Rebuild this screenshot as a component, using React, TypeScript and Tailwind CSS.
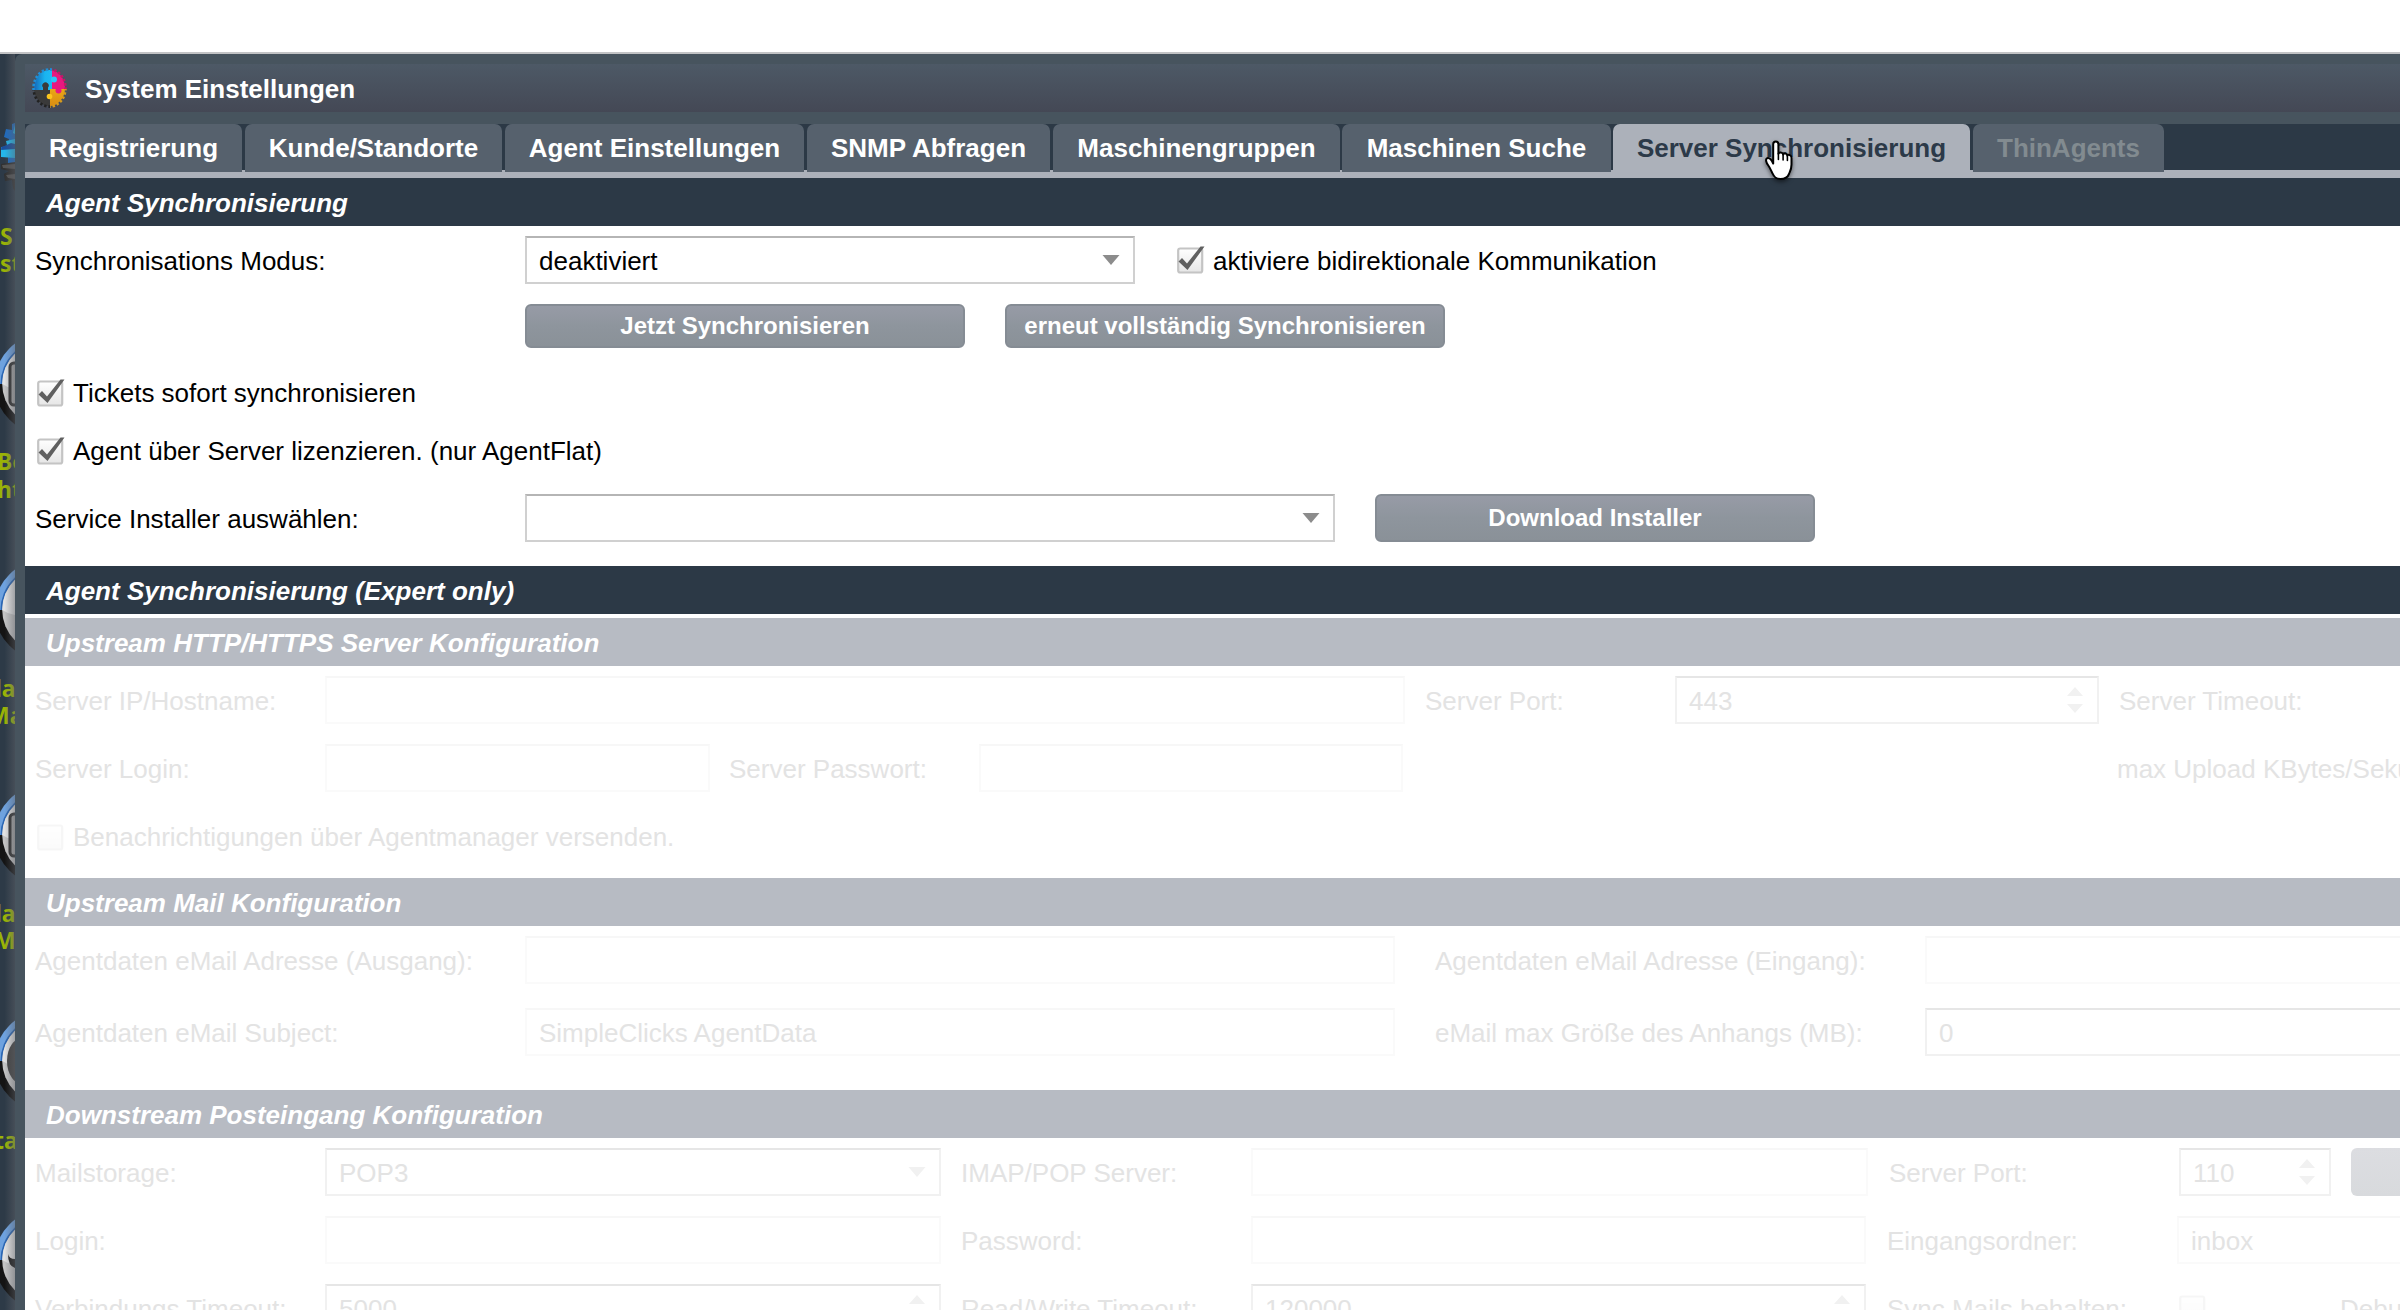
import type { ReactNode } from "react";
import clsx from "clsx";

interface Tab {
  label: string;
  size: string;
  state?: "active" | "disabled";
}

const TABS: Tab[] = [
  { label: "Registrierung", size: "w-[217px] mr-[3px]" },
  { label: "Kunde/Standorte", size: "w-[257px] mr-[3px]" },
  { label: "Agent Einstellungen", size: "w-[299px] mr-[3px]" },
  { label: "SNMP Abfragen", size: "w-[243px] mr-[3px]" },
  { label: "Maschinengruppen", size: "w-[287px] mr-[2px]" },
  { label: "Maschinen Suche", size: "w-[269px] mr-[2px]" },
  { label: "Server Synchronisierung", size: "w-[357px] mr-[3px]", state: "active" },
  { label: "ThinAgents", size: "w-[191px]", state: "disabled" },
];

const DESKTOP_DIALS = [
  { place: "top-[280px]", glyph: "box" },
  { place: "top-[506px]", glyph: "none" },
  { place: "top-[731px]", glyph: "box" },
  { place: "top-[957px]", glyph: "disc" },
  { place: "top-[1156px]", glyph: "arrow" },
];

const DESKTOP_LABELS = [
  { text: "S", place: "top-[169px] left-0" },
  { text: "st", place: "top-[196px] left-0" },
  { text: "Be", place: "top-[394px] left-[-3px]" },
  { text: "ht", place: "top-[422px] left-[-3px]" },
  { text: "la", place: "top-[621px] left-[-5px]" },
  { text: "Ma", place: "top-[648px] left-[-12px]" },
  { text: "la", place: "top-[846px] left-[-5px]" },
  { text: "M", place: "top-[873px] left-[-6px]" },
  { text: "ta", place: "top-[1073px] left-[-6px]" },
];

const AppIcon = () => (
  <svg viewBox="0 0 35 40" className="ml-[7px] h-10 w-[35px] shrink-0">
    <defs>
      <linearGradient id="cyan" x1="0" y1="0" x2="1" y2="0">
        <stop offset="0" stopColor="#1667b8" />
        <stop offset="0.35" stopColor="#19b4f0" />
        <stop offset="1" stopColor="#2cc4fa" />
      </linearGradient>
      <linearGradient id="gold" x1="0" y1="0" x2="0" y2="1">
        <stop offset="0" stopColor="#fcc51c" />
        <stop offset="1" stopColor="#d98d12" />
      </linearGradient>
      <clipPath id="tl"><path d="M0 0H20V22H0z" /></clipPath>
      <clipPath id="tr"><path d="M20 0H35V21H20z" /></clipPath>
      <clipPath id="br"><path d="M18 21H35V40H18z" /></clipPath>
      <clipPath id="bl"><path d="M0 22H18V40H0z" /></clipPath>
    </defs>
    <g clipPath="url(#tl)">
      <ellipse cx="17.5" cy="20" rx="15.5" ry="18" fill="url(#cyan)" />
      <ellipse cx="17.5" cy="20" rx="16" ry="18.6" fill="none" stroke="#1f8fd8" strokeWidth="2.6" strokeDasharray="2.4 1.9" />
    </g>
    <g clipPath="url(#tr)">
      <ellipse cx="17.5" cy="20" rx="15.5" ry="18" fill="#e8187f" />
      <ellipse cx="17.5" cy="20" rx="16" ry="18.6" fill="none" stroke="#c51569" strokeWidth="2.6" strokeDasharray="2.4 1.9" />
    </g>
    <g clipPath="url(#bl)">
      <ellipse cx="17.5" cy="20" rx="15.5" ry="18" fill="#3a3a3a" />
      <ellipse cx="17.5" cy="20" rx="16" ry="18.6" fill="none" stroke="#222" strokeWidth="2.6" strokeDasharray="2.4 1.9" />
    </g>
    <g clipPath="url(#br)">
      <ellipse cx="17.5" cy="20" rx="15.5" ry="18" fill="url(#gold)" />
      <ellipse cx="17.5" cy="20" rx="16" ry="18.6" fill="none" stroke="#d79a1c" strokeWidth="2.6" strokeDasharray="2.4 1.9" />
    </g>
    <circle cx="22" cy="11.5" r="3" fill="#2cc4fa" />
    <circle cx="26.5" cy="22.5" r="3" fill="#e8187f" />
    <circle cx="17.5" cy="28.5" r="2.8" fill="#fcc51c" />
    <path d="M11 23v-3.5a3.2 3.2 0 1 1 5 0V23z" fill="#3a3a3a" />
  </svg>
);

const DesktopGear = () => (
  <svg viewBox="0 0 15 74" className="absolute left-0 top-[67px] h-[74px] w-[15px]">
    <path d="M15 2l-3 1v6l-6-1-2 8 5 2-1 7-7 1v8l7 2v6h7z" fill="#1e6bc0" />
    <path d="M15 4l-2 8 2 1zM15 18l-9 2 1 4 8 1zM15 27L1 28v8l14 1z" fill="#25b6ea" />
    <path d="M2 26l9-4 4 1v5L1 29z" fill="#1b4f9c" />
    <path d="M15 41l-14 2v5l8 2-5 3 1 7 7-1 1 8 2 3z" fill="#313131" />
    <path d="M15 43L2 44l1 3 12 1zM15 53l-9 1 2 3 7 1z" fill="#545454" />
  </svg>
);

const Dial = ({ place, glyph }: { place: string; glyph: string }) => (
  <svg viewBox="-6 -50 21 100" className={clsx("absolute left-[-6px] h-[100px] w-[21px]", place)}>
    <path d="M-5.5 0a50 50 0 0 1 100 0z" fill="#6ea2df" />
    <path d="M-5.5 0a50 50 0 0 0 100 0z" fill="#141414" />
    <path d="M.5 0a44 44 0 0 1 88 0z" fill="#2a66b4" />
    <circle cx="44.5" cy="0" r="42.3" fill="#c4c4c4" />
    <path d="M2.2 0a42.3 42.3 0 0 1 12.8-30V5Q8 4 2.2 0z" fill="#e2e2e2" />
    {glyph === "box" && <rect x="10" y="-21" width="20" height="42" rx="4" fill="#a9a9a9" stroke="#333" strokeWidth="3" />}
    {glyph === "disc" && <ellipse cx="24" cy="0" rx="17" ry="24" fill="#444" />}
    {glyph === "arrow" && <path d="M8-6q1 5 7 5v9Q8 6 8-6z" fill="#1c1c1c" />}
  </svg>
);

const HandCursor = () => (
  <svg viewBox="0 0 30 42" className="absolute left-[151px] top-[16px] h-[42px] w-[30px] drop-shadow-[0_2px_2px_rgba(0,0,0,0.5)]">
    <path
      d="M9.2 20.5V4.2a2.6 2.6 0 0 1 5.2 0v9.6c.4-2 4.4-1.800 4.700.7.500-1.600 4-1.200 4.300 1 .900-1.400 4.100-.5 4.100 2.300v6.600c0 5-1.500 7-2.500 9.500-1.200 3.600-4 5.100-8.500 5.100-5 0-6.500-2.300-8-5.600-1.400-3-2.400-5.600-4.500-8.400-1.600-2.200-2.900-5.800-1-6.700 2.200-.9 4.400 1.200 6.200 5.200z"
      fill="#fff"
      stroke="#000"
      strokeWidth="2"
      strokeLinejoin="round"
    />
    <path d="M14.4 13.5v6M19.1 14.5v5.5M23.4 15.5v5" fill="none" stroke="#000" strokeWidth="1.6" strokeLinecap="round" />
  </svg>
);

const Label = ({ w, children }: { w?: string; children: ReactNode }) => (
  <span className={clsx("shrink-0 pt-[2px] whitespace-nowrap", w)}>{children}</span>
);

interface FieldProps {
  w: string;
  value?: string;
  kind?: "text" | "combo" | "spinner";
  disabled?: boolean;
}

const Field = ({ w, value, kind = "text", disabled }: FieldProps) => (
  <div
    className={clsx(
      "flex h-12 shrink-0 items-center justify-between border-2 bg-white pl-3",
      w,
      !disabled && "border-[#d0d0d0] border-t-[#b5b5b5]",
      disabled && kind === "text" && "border-[#fafafa] border-t-[#f7f7f7]",
      disabled && kind !== "text" && "border-[#f1f1f1] border-t-[#e6e6e6]",
    )}
  >
    <span className="pt-[2px]">{value}</span>
    {kind === "combo" && (
      <svg viewBox="0 0 18 10" className={clsx("mr-[13px] h-[10px] w-[18px]", disabled ? "text-[#f1f1f1]" : "text-[#8c8c8c]")}>
        <path d="M.5 0h17L9 10z" fill="currentColor" />
      </svg>
    )}
    {kind === "spinner" && (
      <svg viewBox="0 0 16 26" className="mr-[14px] h-[26px] w-4 text-[#f1f1f1]">
        <path d="M8 0l8 9H0zM0 17h16l-8 9z" fill="currentColor" />
      </svg>
    )}
  </div>
);

const Checkbox = ({ checked, disabled }: { checked?: boolean; disabled?: boolean }) => (
  <svg viewBox="0 0 30 30" className={clsx("h-[30px] w-[30px] shrink-0", disabled && "opacity-15")}>
    <defs>
      <linearGradient id="box" x1="0" y1="0" x2="0" y2="1">
        <stop offset="0" stopColor="#fff" />
        <stop offset="1" stopColor="#e6e6e6" />
      </linearGradient>
    </defs>
    <rect x="3.2" y="3.5" width="24" height="24" rx="2" fill="url(#box)" stroke="#c4c4c4" strokeWidth="2.2" />
    {checked && <path d="M3.5 16.5l3.5-3.5 5 5.5L25.500 1.500H29.500L12.500 25z" fill="#606060" />}
  </svg>
);

const PushButton = ({ w, children }: { w: string; children?: ReactNode }) => (
  <button
    className={clsx(
      "shrink-0 rounded-[6px] border-2 border-[#858c94] bg-linear-to-b from-[#979ba6] via-[#8e959d] to-[#8a9198] text-[24px] font-bold text-white",
      w,
    )}
  >
    {children}
  </button>
);

const SectionHeader = ({ muted, children }: { muted?: boolean; children: ReactNode }) => (
  <h2
    className={clsx(
      "flex h-12 items-center pt-[2px] pl-[21px] font-bold italic text-white",
      muted ? "bg-[#b7bbc3]" : "bg-[#2c3946]",
    )}
  >
    {children}
  </h2>
);

const Row = ({ className, children }: { className?: string; children: ReactNode }) => (
  <div className={clsx("flex h-12 items-center pl-[10px]", className)}>{children}</div>
);

const Desktop = () => (
  <aside className="relative w-[15px] shrink-0 overflow-hidden bg-[#2d3a47]">
    <DesktopGear />
    {DESKTOP_DIALS.map((d) => (
      <Dial key={d.place} {...d} />
    ))}
    {DESKTOP_LABELS.map((l) => (
      <span
        key={l.place}
        className={clsx("absolute whitespace-nowrap font-['Noto_Sans',sans-serif] text-[23px] leading-[26px] font-bold text-[#9ab306]", l.place)}
      >
        {l.text}
      </span>
    ))}
    {/* window shadow */}
    <div className="absolute inset-0 bg-linear-to-r from-transparent from-30% to-[#5f6269]/50" />
  </aside>
);

const App = () => (
  <div className="flex h-[1310px] w-[2400px] flex-col overflow-hidden bg-white font-['Liberation_Sans',Arial,sans-serif] text-[26px] leading-8 text-black">
    <div className="h-[54px] shrink-0 border-b-2 border-[#c2c3c5]" />

    <div className="flex min-h-0 flex-1 bg-[#2d3a47]">
      <Desktop />

      <section className="flex min-w-0 flex-1 flex-col overflow-hidden rounded-tl-[7px] bg-[#47545e] pl-[10px] pt-[10px]">
        <header className="flex h-12 shrink-0 items-center bg-linear-to-b from-[#4d5966] to-[#444855]">
          <AppIcon />
          <h1 className="ml-[18px] pt-[2px] text-[26px] font-bold text-white">System Einstellungen</h1>
        </header>

        <nav className="mt-3 flex h-[54px] shrink-0 border-b-8 border-[#acb1ba] bg-[#2c3946]">
          {TABS.map((tab) => (
            <div
              key={tab.label}
              className={clsx(
                "relative flex h-12 shrink-0 items-center justify-center rounded-t-[7px] font-bold whitespace-nowrap",
                tab.size,
                tab.state === "active" && "bg-[#acb1ba] text-[#2c3a49]",
                tab.state === "disabled" && "bg-[#56616d] text-[#828b90]",
                !tab.state && "bg-[#56616d] text-white",
              )}
            >
              {tab.label}
              {tab.state === "active" && <HandCursor />}
            </div>
          ))}
        </nav>

        <main className="flex-1 overflow-hidden bg-white">
          <SectionHeader>Agent Synchronisierung</SectionHeader>
          <Row className="mt-[10px]">
            <Label w="w-[490px]">Synchronisations Modus:</Label>
            <Field w="w-[610px]" kind="combo" value="deaktiviert" />
            <div className="ml-10 flex items-center gap-[8px]">
              <Checkbox checked />
              <Label>aktiviere bidirektionale Kommunikation</Label>
            </div>
          </Row>
          <div className="mt-5 flex h-11 gap-10 pl-[500px]">
            <PushButton w="w-[440px]">Jetzt Synchronisieren</PushButton>
            <PushButton w="w-[440px]">erneut vollständig Synchronisieren</PushButton>
          </div>
          <Row className="mt-[21px] gap-[8px]">
            <Checkbox checked />
            <span>Tickets sofort synchronisieren</span>
          </Row>
          <Row className="mt-[10px] gap-[8px]">
            <Checkbox checked />
            <span>Agent über Server lizenzieren. (nur AgentFlat)</span>
          </Row>
          <Row className="mt-[19px]">
            <Label w="w-[490px]">Service Installer auswählen:</Label>
            <Field w="w-[810px]" kind="combo" />
            <PushButton w="ml-10 h-12 w-[440px]">Download Installer</PushButton>
          </Row>

          <div className="mt-6">
            <SectionHeader>Agent Synchronisierung (Expert only)</SectionHeader>
          </div>

          <div className="mt-1 text-[#e3e3e3]">
            <SectionHeader muted>Upstream HTTP/HTTPS Server Konfiguration</SectionHeader>
            <Row className="mt-[10px]">
              <Label w="w-[290px]">Server IP/Hostname:</Label>
              <Field w="w-[1080px]" disabled />
              <Label w="ml-[20px] w-[250px]">Server Port:</Label>
              <Field w="w-[424px]" kind="spinner" value="443" disabled />
              <Label w="ml-[20px]">Server Timeout:</Label>
            </Row>
            <Row className="mt-5">
              <Label w="w-[290px]">Server Login:</Label>
              <Field w="w-[385px]" disabled />
              <Label w="ml-[19px] w-[250px]">Server Passwort:</Label>
              <Field w="w-[424px]" disabled />
              <Label w="ml-[714px]">max Upload KBytes/Sekunde:</Label>
            </Row>
            <Row className="mt-[21px] gap-[8px]">
              <Checkbox disabled />
              <span>Benachrichtigungen über Agentmanager versenden.</span>
            </Row>

            <div className="mt-[17px]">
              <SectionHeader muted>Upstream Mail Konfiguration</SectionHeader>
            </div>
            <Row className="mt-[10px]">
              <Label w="w-[490px]">Agentdaten eMail Adresse (Ausgang):</Label>
              <Field w="w-[870px]" disabled />
              <Label w="ml-[40px] w-[490px]">Agentdaten eMail Adresse (Eingang):</Label>
              <Field w="w-[870px]" disabled />
            </Row>
            <Row className="mt-6">
              <Label w="w-[490px]">Agentdaten eMail Subject:</Label>
              <Field w="w-[870px]" value="SimpleClicks AgentData" disabled />
              <Label w="ml-[40px] w-[490px]">eMail max Größe des Anhangs (MB):</Label>
              <Field w="w-[870px]" kind="spinner" value="0" disabled />
            </Row>

            <div className="mt-[34px]">
              <SectionHeader muted>Downstream Posteingang Konfiguration</SectionHeader>
            </div>
            <Row className="mt-[10px]">
              <Label w="w-[290px]">Mailstorage:</Label>
              <Field w="w-[616px]" kind="combo" value="POP3" disabled />
              <Label w="ml-[20px] w-[290px]">IMAP/POP Server:</Label>
              <Field w="w-[617px]" disabled />
              <Label w="ml-[21px] w-[290px]">Server Port:</Label>
              <Field w="w-[152px]" kind="spinner" value="110" disabled />
              <div className="ml-5 h-12 w-[200px] shrink-0 rounded-[6px] bg-linear-to-b from-[#dcdde1] to-[#d8dadd]" />
            </Row>
            <Row className="mt-5">
              <Label w="w-[290px]">Login:</Label>
              <Field w="w-[616px]" disabled />
              <Label w="ml-[20px] w-[290px]">Password:</Label>
              <Field w="w-[615px]" disabled />
              <Label w="ml-[21px] w-[290px]">Eingangsordner:</Label>
              <Field w="w-[400px]" value="inbox" disabled />
            </Row>
            <Row className="mt-5">
              <Label w="w-[290px]">Verbindungs Timeout:</Label>
              <Field w="w-[616px]" kind="spinner" value="5000" disabled />
              <Label w="ml-[20px] w-[290px]">Read/Write Timeout:</Label>
              <Field w="w-[615px]" kind="spinner" value="120000" disabled />
              <Label w="ml-[21px] w-[290px]">Sync Mails behalten:</Label>
              <Checkbox disabled />
              <Label w="ml-[133px]">Debug:</Label>
            </Row>
          </div>
        </main>
      </section>
    </div>
  </div>
);

export default App;
